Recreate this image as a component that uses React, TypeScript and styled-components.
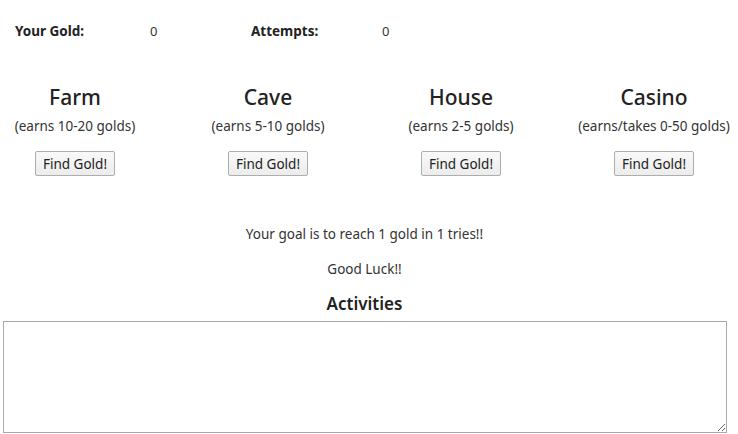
import React from "react";
import styled, { createGlobalStyle } from "styled-components";

const Global = createGlobalStyle`
  html, body { margin: 0; padding: 0; background: #fff; }
  body {
    font-family: "Noto Sans", "Open Sans", sans-serif;
    font-size: 14px;
    color: #333;
  }
  * { box-sizing: border-box; }
`;

const Page = styled.div`
  width: 729px;
`;

const StatsRow = styled.div`
  display: grid;
  grid-template-columns: 135px 101px 131px auto;
  padding: 22px 0 0 15px;
  height: 52px;
  font-size: 13.5px;
  line-height: 18px;
`;

const StatLabel = styled.span`
  font-weight: 700;
  color: #222;
`;

const StatValue = styled.span`
  font-size: 13px;
  color: #333;
`;

const Locations = styled.div`
  display: grid;
  grid-template-columns: repeat(4, 193px);
  margin: 31px 0 0 -21.5px;
`;

const Location = styled.div`
  display: flex;
  flex-direction: column;
  align-items: center;
  text-align: center;
`;

const LocationName = styled.h3`
  margin: 0;
  font-size: 21px;
  font-weight: 500;
  line-height: 28px;
  color: #222;
`;

const LocationNote = styled.p`
  margin: 5px 0 0;
  font-size: 13.5px;
  line-height: 20px;
  white-space: nowrap;
`;

const FindButton = styled.button`
  margin-top: 15px;
  width: 80px;
  height: 25px;
  padding: 0;
  font-family: inherit;
  font-size: 13.5px;
  color: #222;
  background: linear-gradient(#f9f9f9, #ececec);
  border: 1px solid #adadad;
  border-radius: 2px;
`;

const Message = styled.p`
  margin: 0;
  text-align: center;
  font-size: 13.5px;
  line-height: 20px;
`;

const GoalText = styled(Message)`
  margin-top: 48px;
`;

const LuckText = styled(Message)`
  margin-top: 15px;
`;

const SectionTitle = styled.h4`
  margin: 14px 0 0;
  text-align: center;
  font-size: 17px;
  font-weight: 600;
  line-height: 22px;
  color: #222;
`;

const Log = styled.textarea`
  display: block;
  margin: 6px 0 0 3px;
  width: 724px;
  height: 112px;
  border: 1px solid #a9a9a9;
  resize: both;
  font-family: inherit;
`;

const locations = [
  { name: "Farm", note: "(earns 10-20 golds)" },
  { name: "Cave", note: "(earns 5-10 golds)" },
  { name: "House", note: "(earns 2-5 golds)" },
  { name: "Casino", note: "(earns/takes 0-50 golds)" },
];

export default function App() {
  return (
    <Page>
      <Global />
      <StatsRow>
        <StatLabel>Your Gold:</StatLabel>
        <StatValue>0</StatValue>
        <StatLabel>Attempts:</StatLabel>
        <StatValue>0</StatValue>
      </StatsRow>
      <Locations>
        {locations.map((l) => (
          <Location key={l.name}>
            <LocationName>{l.name}</LocationName>
            <LocationNote>{l.note}</LocationNote>
            <FindButton>Find Gold!</FindButton>
          </Location>
        ))}
      </Locations>
      <GoalText>Your goal is to reach 1 gold in 1 tries!!</GoalText>
      <LuckText>Good Luck!!</LuckText>
      <SectionTitle>Activities</SectionTitle>
      <Log />
    </Page>
  );
}
